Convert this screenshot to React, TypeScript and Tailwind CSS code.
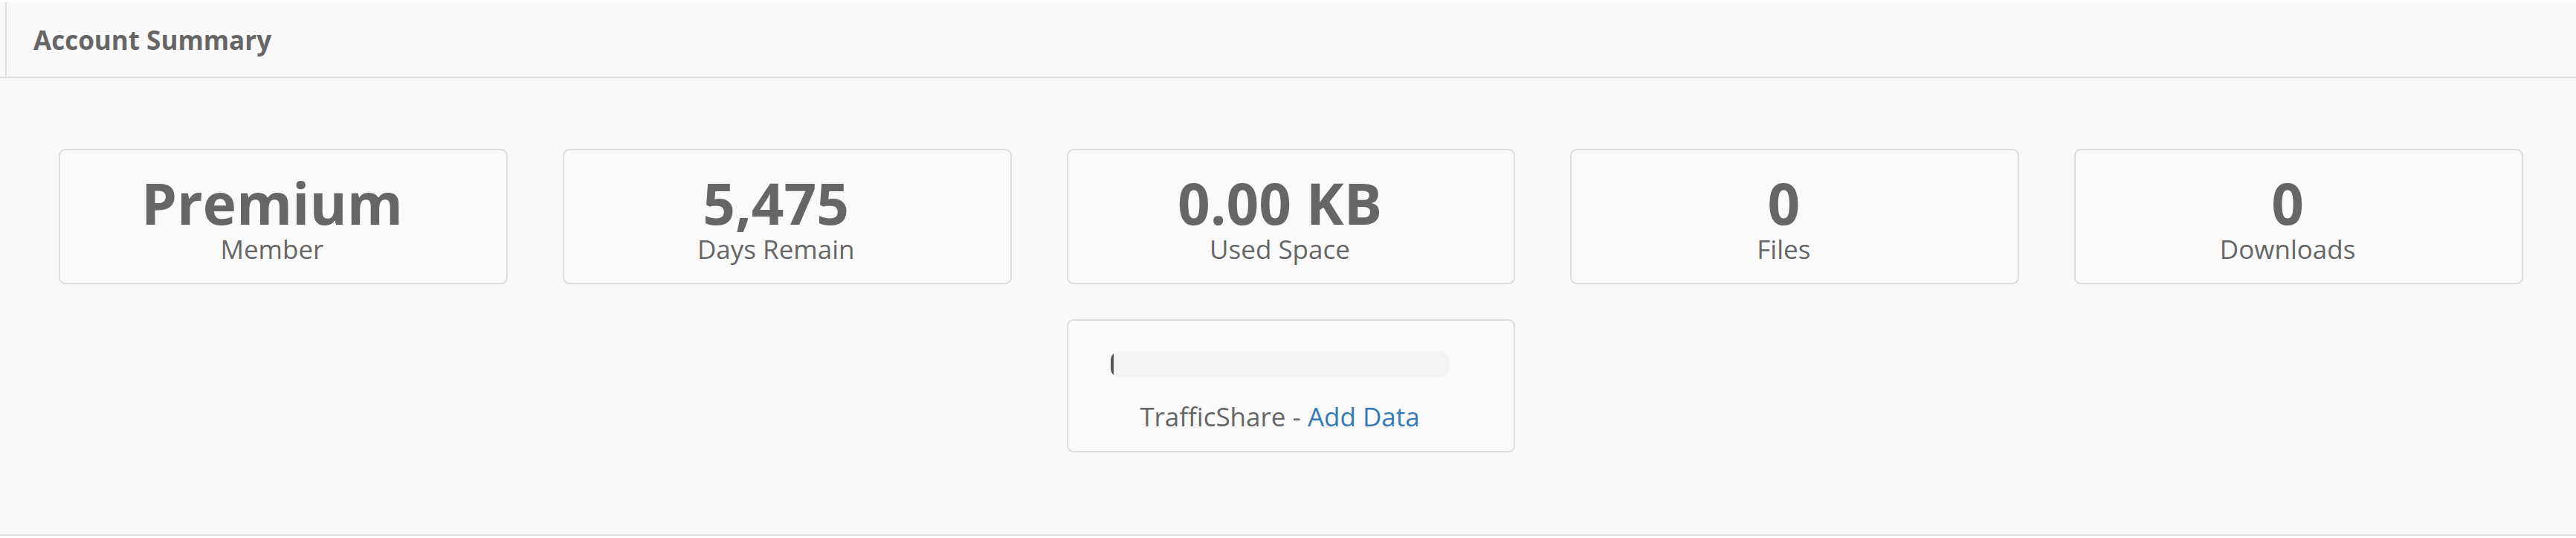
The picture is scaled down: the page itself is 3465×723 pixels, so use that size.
import React from "react";

const stats = [
  { value: "Premium", label: "Member" },
  { value: "5,475", label: "Days Remain" },
  { value: "0.00 KB", label: "Used Space" },
  { value: "0", label: "Files" },
  { value: "0", label: "Downloads" },
];

export default function App() {
  return (
    <div className="w-[3465px] h-[723px] bg-white pt-[3px] font-['Open_Sans',sans-serif] text-[#666]">
      <div className="h-[717px] bg-[#f9f9f9] border-b-2 border-[#e0e0e0]">
        <div className="flex h-[102px] items-center border-b-2 border-[#dddddd]">
          <div className="ml-[7px] h-full w-[2px] bg-[#dddddd]" />
          <h2 className="ml-[36px] text-[35px] font-bold leading-none text-[#666]">
            Account Summary
          </h2>
        </div>
        <div className="grid grid-cols-5 items-start gap-x-[74px] gap-y-[47px] pl-[79px] pr-[71px] pt-[95px]">
          {stats.map((s) => (
            <div
              key={s.label}
              className="h-[182px] rounded-[9px] border-2 border-[#dddddd] bg-[#fafafa] pt-[31px] pr-[30px] text-center"
            >
              <div className="text-[76.5px] font-bold leading-[79px] text-[#666]">{s.value}</div>
              <div className="text-[35px] leading-[45px] text-[#666]">{s.label}</div>
            </div>
          ))}
          <div className="col-start-3 h-[179px] rounded-[9px] border-2 border-[#dddddd] bg-[#fafafa] pt-[41px] pr-[30px]">
            <div className="mx-auto w-[80%]">
              <div className="h-[35px] w-full overflow-hidden rounded-[12px] bg-[#f3f3f3]">
                <div className="h-full w-[4px] bg-[#555555]" />
              </div>
              <div className="mt-[30px] text-center text-[35px] leading-[45px] text-[#666]">
                TrafficShare - <a className="text-[#337ab7]" href="#">Add Data</a>
              </div>
            </div>
          </div>
        </div>
      </div>
    </div>
  );
}
